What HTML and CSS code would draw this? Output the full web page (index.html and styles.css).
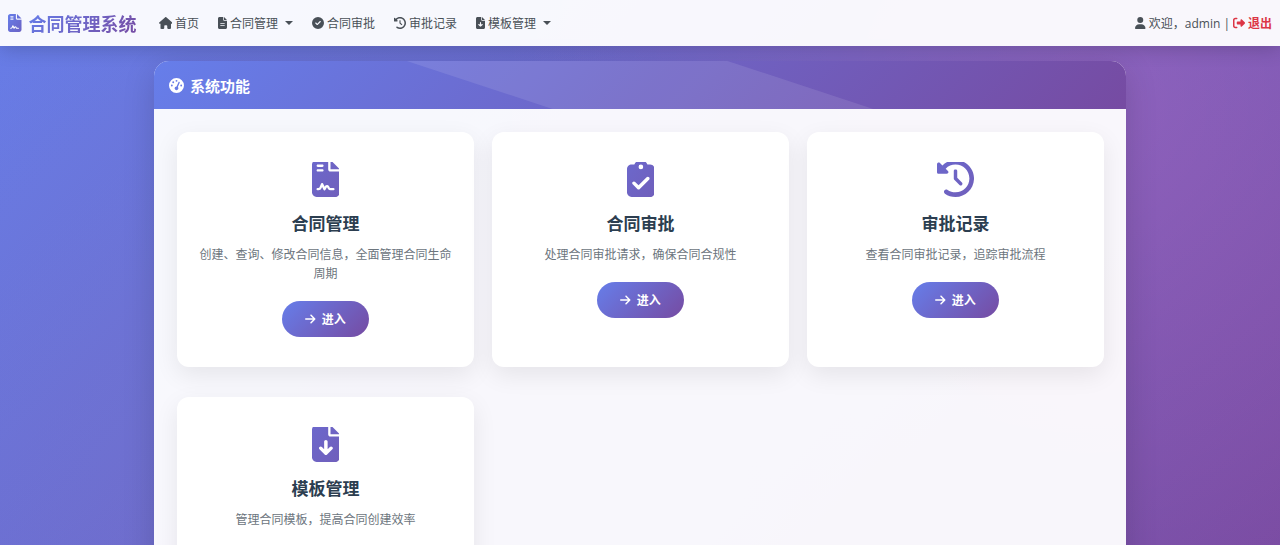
FILE: index.html
```html
<!DOCTYPE html>
<html lang="zh-CN">
<head>
  <meta charset="UTF-8">
  <meta name="viewport" content="width=device-width, initial-scale=1.0">
  <title>合同管理系统</title>
  <link rel="stylesheet" href="styles.css">
</head>
<body>
  <!-- Icon definitions -->
  <svg class="icon-defs" width="0" height="0" aria-hidden="true">
    <defs>
      <linearGradient id="brand-gradient" x1="0" y1="0" x2="1" y2="1">
        <stop offset="0" stop-color="#667eea"/>
        <stop offset="1" stop-color="#6b62c4"/>
      </linearGradient>
      <linearGradient id="card-gradient" x1="0" y1="0" x2="1" y2="1">
        <stop offset="0" stop-color="#6c68cc"/>
        <stop offset="1" stop-color="#705fbb"/>
      </linearGradient>
      <g id="contract">
        <path fill-rule="evenodd" d="M64 0C28.700 0 0 28.700 0 64V448c0 35.300 28.700 64 64 64H320c35.300 0 64-28.700 64-64V160H256c-17.700 0-32-14.300-32-32V0H64zM256 0V128H384L256 0zM80 64h64c8.800 0 16 7.200 16 16s-7.200 16-16 16H80c-8.800 0-16-7.200-16-16s7.200-16 16-16zM80 128h64c8.800 0 16 7.200 16 16s-7.200 16-16 16H80c-8.800 0-16-7.200-16-16s7.200-16 16-16z"/>
        <path fill="none" stroke="#fff" stroke-width="32" stroke-linecap="round" stroke-linejoin="round" d="M78 404h10c16 0 26-8 31-22l20-48 34 70 20-34c8-12 22-12 29 0l10 18c6 10 14 16 26 16h38"/>
      </g>
      <path id="house" d="M575.800 255.500c0 18-15 32.100-32 32.100h-32l.7 160.200c0 2.700-.2 5.400-.5 8.100V472c0 22.100-17.900 40-40 40H392c-22.100 0-40-17.900-40-40V384c0-17.700-14.300-32-32-32H256c-17.700 0-32 14.300-32 32v88c0 22.100-17.900 40-40 40H104c-22.100 0-40-17.900-40-40V287.600H32c-18 0-32-14-32-32.100c0-9 3-17 10-24L266.400 8c7-7 15-8 22-8s15 2 21 7L564.800 231.500c8 7 12 15 11 24z"/>
      <path id="file-lines" d="M64 0C28.700 0 0 28.700 0 64V448c0 35.300 28.700 64 64 64H320c35.300 0 64-28.700 64-64V160H256c-17.700 0-32-14.300-32-32V0H64zM256 0V128H384L256 0zM112 256H272c8.800 0 16 7.200 16 16s-7.200 16-16 16H112c-8.800 0-16-7.200-16-16s7.200-16 16-16zm0 96H272c8.800 0 16 7.200 16 16s-7.200 16-16 16H112c-8.800 0-16-7.200-16-16s7.200-16 16-16z" fill-rule="evenodd"/>
      <path id="check" fill-rule="evenodd" d="M256 512A256 256 0 1 0 256 0a256 256 0 1 0 0 512zM369 209L241 337c-9.400 9.400-24.600 9.400-33.900 0l-64-64c-9.400-9.400-9.400-24.600 0-33.900s24.600-9.400 33.900 0l47 47L335 175c9.400-9.400 24.600-9.400 33.900 0s9.400 24.600 0 33.900z"/>
      <path id="history" d="M75 75L41 41C25.900 25.900 0 36.600 0 57.900V168c0 13.300 10.700 24 24 24H134.100c21.400 0 32.100-25.900 17-41l-30.800-30.800C155 85.500 203 64 256 64c106 0 192 86 192 192s-86 192-192 192c-40.800 0-78.600-12.700-109.700-34.400c-14.500-10.100-34.400-6.600-44.600 7.900s-6.600 34.400 7.900 44.600C151.200 495 201.700 512 256 512c141.400 0 256-114.600 256-256S397.400 0 256 0C185.300 0 121.300 28.700 75 75zm181 53c-13.300 0-24 10.700-24 24V256c0 6.400 2.500 12.500 7 17l72 72c9.400 9.400 24.600 9.400 33.900 0s9.400-24.600 0-33.900l-65-65V152c0-13.300-10.700-24-24-24z"/>
      <path id="file-down" fill-rule="evenodd" d="M64 0C28.700 0 0 28.700 0 64V448c0 35.300 28.700 64 64 64H320c35.300 0 64-28.700 64-64V160H256c-17.700 0-32-14.300-32-32V0H64zM256 0V128H384L256 0zM216 232V334.100l31-31c9.400-9.400 24.600-9.400 33.900 0s9.400 24.600 0 33.900l-72 72c-9.400 9.400-24.600 9.400-33.900 0l-72-72c-9.400-9.400-9.400-24.600 0-33.900s24.600-9.400 33.900 0l31 31V232c0-13.300 10.700-24 24-24s24 10.700 24 24z"/>
      <path id="clipboard" fill-rule="evenodd" d="M192 0c-41.800 0-77.400 26.700-90.500 64H64C28.700 64 0 92.700 0 128V448c0 35.300 28.700 64 64 64H320c35.300 0 64-28.700 64-64V128c0-35.300-28.700-64-64-64H282.500C269.400 26.700 233.800 0 192 0zm0 64a32 32 0 1 1 0 64 32 32 0 1 1 0-64zM305 273L177 401c-9.400 9.400-24.600 9.400-33.900 0L79 337c-9.400-9.400-9.400-24.600 0-33.900s24.600-9.400 33.900 0l47 47L271 239c9.400-9.400 24.600-9.400 33.900 0s9.400 24.600 0 33.900z"/>
      <path id="user" d="M224 256A128 128 0 1 0 224 0a128 128 0 1 0 0 256zm-45.700 48C79.800 304 0 383.800 0 482.300C0 498.700 13.300 512 29.700 512H418.300c16.400 0 29.700-13.300 29.700-29.700C448 383.800 368.200 304 269.700 304H178.300z"/>
      <path id="logout" d="M377.900 105.900L500.700 228.700c7.200 7.200 11.300 17.100 11.300 27.300s-4.100 20.100-11.300 27.300L377.900 406.100c-6.400 6.400-15 9.900-24 9.900c-18.700 0-33.900-15.200-33.900-33.900l0-62.100-128 0c-17.700 0-32-14.300-32-32l0-64c0-17.700 14.300-32 32-32l128 0 0-62.100c0-18.700 15.200-33.900 33.900-33.900c9 0 17.600 3.600 24 9.900zM160 96L96 96c-17.700 0-32 14.300-32 32l0 256c0 17.700 14.300 32 32 32l64 0c17.700 0 32 14.300 32 32s-14.300 32-32 32l-64 0c-53 0-96-43-96-96L0 128C0 75 43 32 96 32l64 0c17.700 0 32 14.300 32 32s-14.300 32-32 32z"/>
      <path id="arrow" d="M438.600 278.600c12.500-12.500 12.500-32.800 0-45.300l-160-160c-12.500-12.500-32.800-12.500-45.300 0s-12.500 32.800 0 45.300L338.800 224 32 224c-17.700 0-32 14.300-32 32s14.300 32 32 32l306.700 0L233.400 393.400c-12.500 12.500-12.500 32.800 0 45.300s32.800 12.500 45.300 0l160-160z"/>
      <path id="gauge" fill-rule="evenodd" d="M0 256a256 256 0 1 1 512 0A256 256 0 1 1 0 256zM288 96a32 32 0 1 0 -64 0 32 32 0 1 0 64 0zM256 416c35.300 0 64-28.700 64-64c0-17.400-6.900-33.100-18.100-44.600L366 161.700c5.300-12.100-.2-26.300-12.300-31.600s-26.300 .2-31.600 12.300L257.900 288c-.6 0-1.300 0-1.900 0c-35.300 0-64 28.700-64 64s28.700 64 64 64zM176 144a32 32 0 1 0 -64 0 32 32 0 1 0 64 0zM96 288a32 32 0 1 0 0-64 32 32 0 1 0 0 64zm352-32a32 32 0 1 0 -64 0 32 32 0 1 0 64 0z"/>
    </defs>
  </svg>

  <!-- Navbar -->
  <nav class="navbar">
    <a class="brand" href="#">
      <svg class="brand-icon" viewBox="0 0 384 512" fill="url(#brand-gradient)"><use href="#contract"/></svg>
      <span class="brand-text">合同管理系统</span>
    </a>
    <div class="nav-links">
      <a class="nav-link" href="#"><svg class="icon" viewBox="0 0 576 512"><use href="#house"/></svg>首页</a>
      <button class="nav-link dropdown" type="button"><svg class="icon" viewBox="0 0 384 512"><use href="#file-lines"/></svg>合同管理</button>
      <a class="nav-link" href="#"><svg class="icon" viewBox="0 0 512 512"><use href="#check"/></svg>合同审批</a>
      <a class="nav-link" href="#"><svg class="icon" viewBox="0 0 512 512"><use href="#history"/></svg>审批记录</a>
      <button class="nav-link dropdown" type="button"><svg class="icon" viewBox="0 0 384 512"><use href="#file-down"/></svg>模板管理</button>
    </div>
    <div class="nav-user">
      <svg class="icon" viewBox="0 0 448 512"><use href="#user"/></svg>
      <span>欢迎，admin |</span>
      <a class="logout" href="#"><svg class="icon" viewBox="0 0 512 512"><use href="#logout"/></svg>退出</a>
    </div>
  </nav>

  <!-- Main panel -->
  <main class="panel">
    <header class="panel-header">
      <svg class="panel-icon" viewBox="0 0 512 512"><use href="#gauge"/></svg>
      <h1 class="panel-title">系统功能</h1>
    </header>
    <div class="card-grid">
      <section class="card">
        <svg class="card-icon" viewBox="0 28 384 484"><use href="#contract"/></svg>
        <h2 class="card-title">合同管理</h2>
        <p class="card-text">创建、查询、修改合同信息，全面管理合同生命周期</p>
        <a class="btn" href="#"><svg class="icon" viewBox="0 0 448 512"><use href="#arrow"/></svg>进入</a>
      </section>
      <section class="card">
        <svg class="card-icon" viewBox="0 28 384 484"><use href="#clipboard"/></svg>
        <h2 class="card-title">合同审批</h2>
        <p class="card-text">处理合同审批请求，确保合同合规性</p>
        <a class="btn" href="#"><svg class="icon" viewBox="0 0 448 512"><use href="#arrow"/></svg>进入</a>
      </section>
      <section class="card">
        <svg class="card-icon" viewBox="0 28 512 484"><use href="#history"/></svg>
        <h2 class="card-title">审批记录</h2>
        <p class="card-text">查看合同审批记录，追踪审批流程</p>
        <a class="btn" href="#"><svg class="icon" viewBox="0 0 448 512"><use href="#arrow"/></svg>进入</a>
      </section>
      <section class="card">
        <svg class="card-icon" viewBox="0 28 384 484"><use href="#file-down"/></svg>
        <h2 class="card-title">模板管理</h2>
        <p class="card-text">管理合同模板，提高合同创建效率</p>
        <a class="btn" href="#"><svg class="icon" viewBox="0 0 448 512"><use href="#arrow"/></svg>进入</a>
      </section>
    </div>
  </main>
</body>
</html>
```
FILE: styles.css
```css
/* General Styles */
* {
  box-sizing: border-box;
}
body {
  margin: 0;
  min-height: 100vh;
  font-family: "Open Sans", "Noto Sans CJK SC", sans-serif;
  font-size: 12px;
  color: #495057;
  background:
    radial-gradient(circle at 20% 80%, rgba(120, 119, 198, 0.3) 0%, transparent 50%),
    radial-gradient(circle at 85% 20%, rgba(255, 119, 198, 0.2) 0%, transparent 50%),
    linear-gradient(135deg, #667eea 0%, #764ba2 100%);
  background-attachment: fixed;
}
a {
  color: inherit;
  text-decoration: none;
}
.icon-defs {
  position: absolute;
}
.icon {
  height: 12px;
  fill: currentColor;
  flex: none;
}

/* Navbar */
.navbar {
  position: relative;
  display: flex;
  align-items: center;
  height: 46px;
  padding: 0 8px;
  background: rgba(255, 255, 255, 0.95);
  box-shadow: 0 2px 20px rgba(0, 0, 0, 0.2);
}
.brand {
  display: flex;
  align-items: center;
  gap: 7px;
  font-size: 18px;
  font-weight: bold;
}
.brand-icon {
  height: 18px;
}
.brand-text {
  background: linear-gradient(135deg, #667eea, #764ba2);
  background-clip: text;
  -webkit-background-clip: text;
  color: transparent;
}
.nav-links {
  display: flex;
  gap: 19px;
  margin-left: 22px;
}
.nav-link {
  display: flex;
  align-items: center;
  gap: 3px;
  padding: 0;
  border: none;
  background: none;
  font: inherit;
  color: inherit;
  cursor: pointer;
}
.dropdown::after {
  content: "";
  margin-left: 4px;
  border-top: 4px solid;
  border-left: 4px solid transparent;
  border-right: 4px solid transparent;
}
.nav-user {
  display: flex;
  align-items: center;
  gap: 3px;
  margin-left: auto;
}
.logout {
  display: flex;
  align-items: center;
  gap: 3px;
  font-weight: bold;
  color: #dc3545;
}

/* Panel */
.panel {
  width: calc(100% - 32px);
  max-width: 972px;
  margin: 15px auto 30px;
  border-radius: 15px;
  overflow: hidden;
  background: rgba(255, 255, 255, 0.95);
  box-shadow: 0 8px 32px rgba(0, 0, 0, 0.15);
}
.panel-header {
  position: relative;
  display: flex;
  align-items: center;
  gap: 6px;
  height: 48px;
  padding: 0 15px;
  color: white;
  background: linear-gradient(135deg, #667eea 0%, #764ba2 100%);
}
/* Diagonal sheen across the header */
.panel-header::before {
  content: "";
  position: absolute;
  inset: 0;
  background: rgba(255, 255, 255, 0.1);
  clip-path: polygon(26% 0, 59% 0, 74% 100%, 41% 100%);
}
.panel-icon {
  height: 15px;
  fill: currentColor;
}
.panel-title {
  margin: 0;
  font-size: 15px;
  font-weight: bold;
}

/* Cards */
.card-grid {
  display: grid;
  grid-template-columns: repeat(3, 1fr);
  gap: 30px 18px;
  padding: 23px 22px 23px 23px;
}
.card {
  display: flex;
  flex-direction: column;
  align-items: center;
  padding: 30px 20px;
  border-radius: 12px;
  background: white;
  text-align: center;
  box-shadow: 0 8px 24px rgba(0, 0, 0, 0.08);
}
.card-icon {
  height: 35px;
  margin-bottom: 17px;
  fill: url(#card-gradient);
}
.card-title {
  margin: 0 0 11px;
  font-size: 17px;
  line-height: 20px;
  font-weight: bold;
  color: #2c3e50;
}
.card-text {
  margin: 0 0 18px;
  line-height: 19px;
  color: #6c757d;
}
.btn {
  display: flex;
  align-items: center;
  gap: 6px;
  height: 36px;
  padding: 0 23px;
  border-radius: 18px;
  color: white;
  font-weight: bold;
  background: linear-gradient(135deg, #667eea 0%, #764ba2 100%);
}

@media (max-width: 768px) {
  .navbar {
    height: auto;
    flex-wrap: wrap;
    padding: 8px;
  }
  .card-grid {
    grid-template-columns: 1fr;
  }
}
```
